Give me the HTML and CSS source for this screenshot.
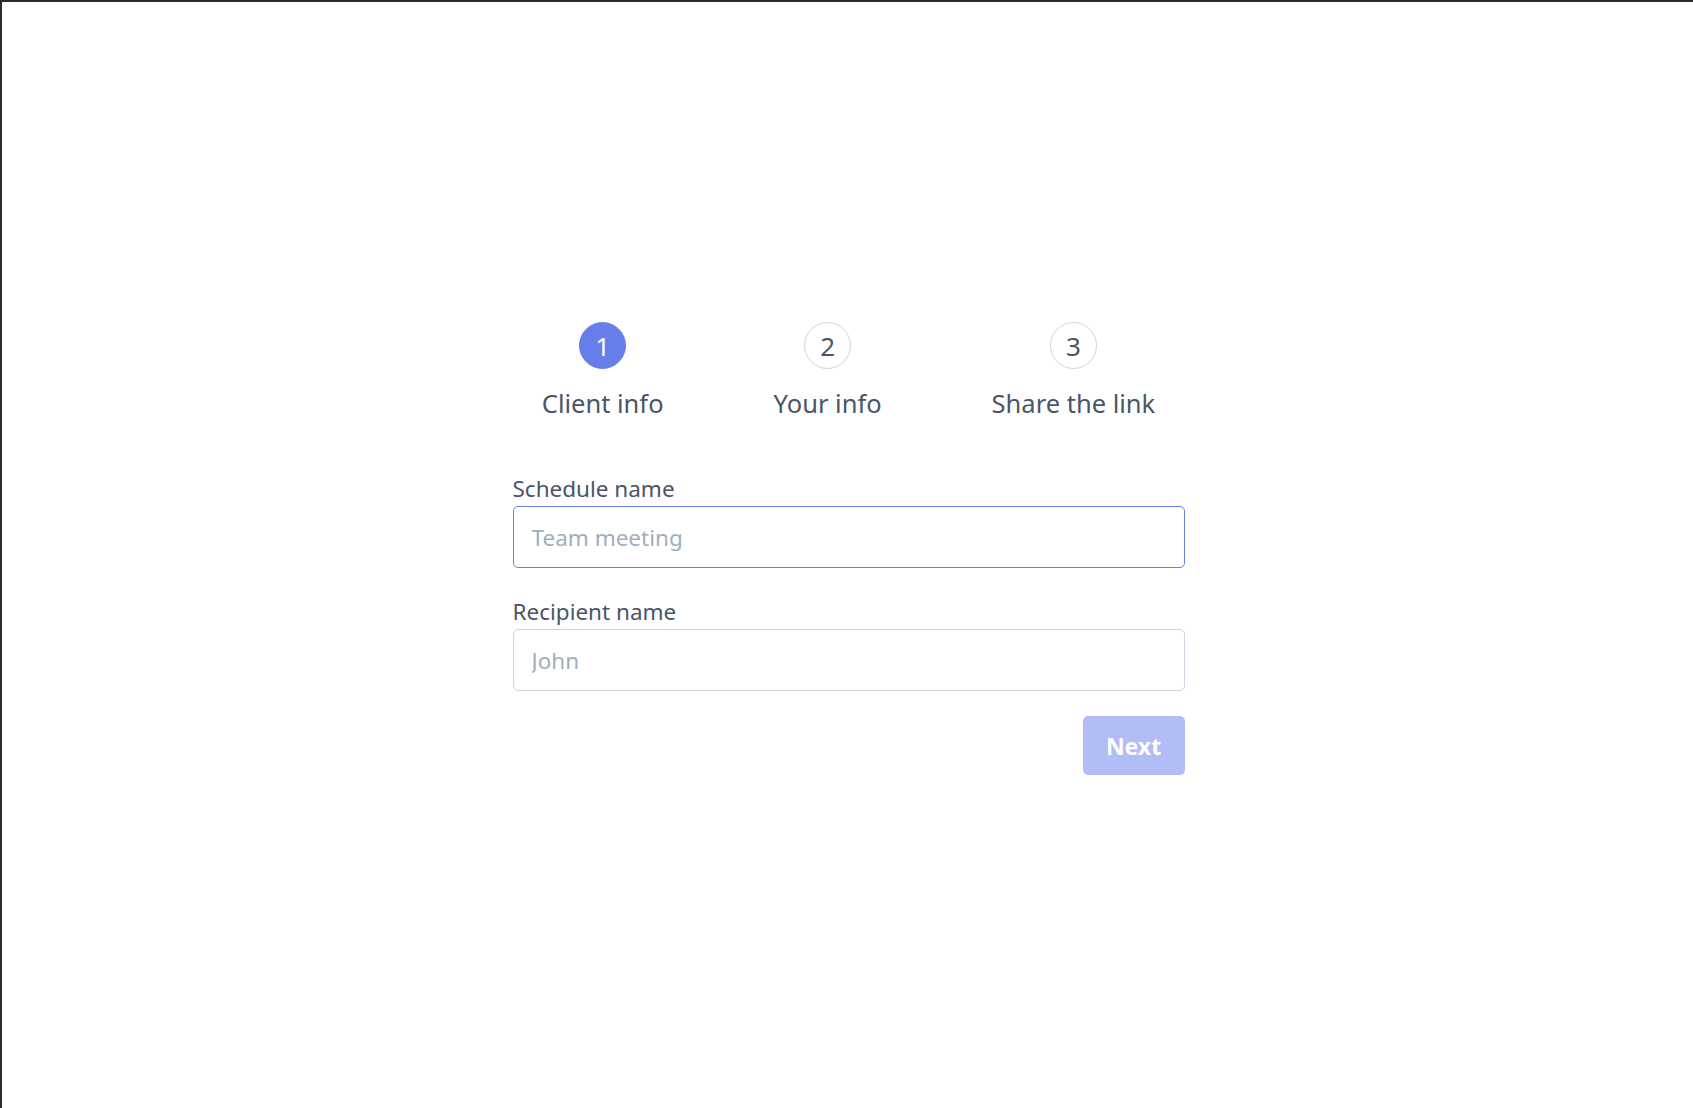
FILE: index.html
```html
<!DOCTYPE html>
<html lang="en">
<head>
<meta charset="utf-8">
<title>Schedule</title>
<link rel="stylesheet" href="styles.css">
</head>
<body>
<div class="frame">
  <main class="wizard">
    <ol class="steps">
      <li class="step step--active">
        <span class="step-num">1</span>
        <span class="step-label">Client info</span>
      </li>
      <li class="step">
        <span class="step-num">2</span>
        <span class="step-label">Your info</span>
      </li>
      <li class="step">
        <span class="step-num">3</span>
        <span class="step-label">Share the link</span>
      </li>
    </ol>
    <form class="form">
      <label class="field">
        <span class="field-label">Schedule name</span>
        <input class="input input--focus" type="text" placeholder="Team meeting">
      </label>
      <label class="field">
        <span class="field-label">Recipient name</span>
        <input class="input" type="text" placeholder="John">
      </label>
      <div class="actions">
        <button class="btn" type="button" disabled>Next</button>
      </div>
    </form>
  </main>
</div>
</body>
</html>
```
FILE: styles.css
```css
* { box-sizing: border-box; }
html, body { margin: 0; padding: 0; background: #ffffff; }
body {
  font-family: "Noto Sans", "Open Sans", "Liberation Sans", sans-serif;
  color: #4a5568;
}
.frame {
  height: 1108px;
  border-top: 2px solid #2c2c30;
  border-left: 2px solid #2c2c30;
  padding-top: 320px;
}
.wizard {
  width: 672px;
  margin: 0 auto;
  position: relative;
  left: 1px;
}
.steps {
  list-style: none;
  margin: 0;
  padding: 0;
  display: flex;
  justify-content: center;
  gap: 110px;
}
.step {
  display: flex;
  flex-direction: column;
  align-items: center;
}
.step-num {
  width: 47px;
  height: 47px;
  border-radius: 50%;
  border: 1px solid #cbd5e0;
  display: flex;
  align-items: center;
  justify-content: center;
  font-size: 26px;
  color: #4a5568;
  line-height: 1;
}
.step--active .step-num {
  background: #667eea;
  border-color: #667eea;
  color: #ffffff;
}
.step-label {
  margin-top: 18px;
  font-size: 25.5px;
  line-height: 32px;
  color: #4a5568;
}
.form {
  margin-top: 56px;
  display: flex;
  flex-direction: column;
}
.field {
  display: flex;
  flex-direction: column;
}
.field + .field {
  margin-top: 30px;
}
.field-label {
  font-size: 22.5px;
  line-height: 28px;
  color: #4a5568;
  margin-bottom: 3px;
}
.input {
  height: 62px;
  width: 100%;
  border: 1px solid #cbd5e0;
  border-radius: 5px;
  padding: 0 18px;
  font: inherit;
  font-size: 22.5px;
  color: #4a5568;
  outline: none;
}
.input::placeholder { color: #a0aec0; }
.input--focus { border-color: #667eea; }
.actions {
  display: flex;
  justify-content: flex-end;
  margin-top: 25px;
}
.btn {
  width: 102px;
  height: 59px;
  border: none;
  border-radius: 5px;
  background: #b3bdf5;
  color: #ffffff;
  font-family: inherit;
  font-weight: 700;
  font-size: 23px;
}
```
